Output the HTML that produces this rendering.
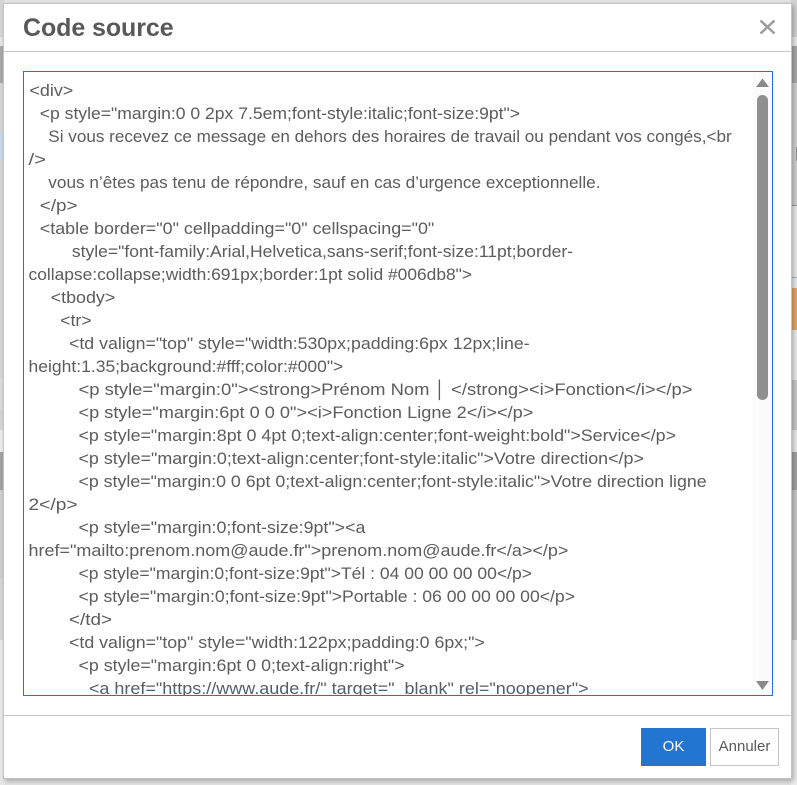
<!DOCTYPE html>
<html lang="fr">
<head>
<meta charset="utf-8">
<title>Code source</title>
<style>
html,body{margin:0;padding:0;width:797px;height:785px;overflow:hidden;background:#e4e4e4;font-family:"Liberation Sans",Arial,sans-serif}
.b{position:absolute}
#dlg{position:absolute;left:4px;top:4px;width:787px;height:774px;background:#fff;box-shadow:0 0 0 1px #c4c4c4,2px 2px 5px 1px rgba(0,0,0,.28)}
#ta{position:absolute;left:23px;top:71px;width:748px;height:623px;border:1px solid #2276d2;background:#fff}
#track{position:absolute;left:753px;top:72px;width:19px;height:623px;background:#fbfbfb}
#thumb{position:absolute;left:757px;top:95px;width:11px;height:305px;background:#8f8f8f;border-radius:5.5px}
svg{position:absolute;left:0;top:0}
svg text{font-family:"Liberation Sans",Arial,sans-serif;font-size:17px;fill:#5c5c5c;white-space:pre}
.btn{position:absolute;top:728px;height:38px;line-height:38px;text-align:center;font-size:15px;box-sizing:border-box}
#ok{left:641px;width:65px;background:#2276d2;color:#fff}
#an{left:710px;width:69px;background:#fff;border:1px solid #c5c5c5;line-height:36px;color:#595959}
</style>
</head>
<body>
<div class="b" style="left:0;top:0;width:4px;height:785px;background:#d6d6d6"></div>
<div class="b" style="left:0;top:37px;width:4px;height:9px;background:#e6e6e6"></div>
<div class="b" style="left:0;top:46px;width:4px;height:37px;background:#a8a8a8"></div>
<div class="b" style="left:0;top:132px;width:4px;height:28px;background:#c8d8ea"></div>
<div class="b" style="left:0;top:378px;width:4px;height:32px;background:#dcdcdc"></div>
<div class="b" style="left:0;top:430px;width:4px;height:22px;background:#ececec"></div>
<div class="b" style="left:0;top:452px;width:4px;height:38px;background:#a3a3a3"></div>
<div class="b" style="left:0;top:490px;width:4px;height:88px;background:#cfcfcf"></div>
<div class="b" style="left:0;top:640px;width:4px;height:145px;background:#e8e8e8"></div>

<div class="b" style="left:791px;top:0;width:6px;height:785px;background:#d4d4d4"></div>
<div class="b" style="left:791px;top:37px;width:6px;height:9px;background:#ececec"></div>
<div class="b" style="left:791px;top:46px;width:6px;height:37px;background:#ababab"></div>
<div class="b" style="left:796px;top:147px;width:1px;height:14px;background:#999"></div>
<div class="b" style="left:791px;top:205px;width:6px;height:175px;background:#eeeeee"></div>
<div class="b" style="left:791px;top:205px;width:6px;height:1px;background:#999"></div>
<div class="b" style="left:791px;top:277px;width:6px;height:1px;background:#9db8d8"></div>
<div class="b" style="left:791px;top:288px;width:6px;height:42px;background:#e3ab6c"></div>
<div class="b" style="left:791px;top:380px;width:6px;height:50px;background:#cdcdcd"></div>
<div class="b" style="left:791px;top:430px;width:6px;height:22px;background:#eeeeee"></div>
<div class="b" style="left:791px;top:452px;width:6px;height:38px;background:#a5a5a5"></div>
<div class="b" style="left:791px;top:490px;width:6px;height:150px;background:#cccccc"></div>
<div class="b" style="left:791px;top:640px;width:6px;height:145px;background:#eeeeee"></div>

<div id="dlg"></div>
<div class="b" style="left:4px;top:51px;width:787px;height:1px;background:#c5c5c5"></div>
<div class="b" style="left:4px;top:715px;width:787px;height:1px;background:#c5c5c5"></div>
<div class="b" style="left:23px;top:14px;font-size:25px;line-height:28px;font-weight:bold;color:#595959;white-space:nowrap;letter-spacing:-.08px">Code source</div>
<svg width="797" height="785" viewBox="0 0 797 785" style="z-index:3">
<path d="M760.5 20.5 L774.5 33.5 M774.5 20.5 L760.5 33.5" stroke="#9d9d9d" stroke-width="2.5" fill="none"/>
</svg>

<div id="ta"></div>
<svg width="797" height="785" viewBox="0 0 797 785" style="z-index:2">
<defs><clipPath id="c"><rect x="24" y="72" width="729" height="623"/></clipPath></defs>
<g clip-path="url(#c)"><g transform="translate(0,1)">
<text x="29.4" y="95" textLength="43.9" lengthAdjust="spacingAndGlyphs">&lt;div&gt;</text>
<text x="39.8" y="118" textLength="480.2" lengthAdjust="spacingAndGlyphs">&lt;p style="margin:0 0 2px 7.5em;font-style:italic;font-size:9pt"&gt;</text>
<text x="48.3" y="141" textLength="683.4" lengthAdjust="spacingAndGlyphs">Si vous recevez ce message en dehors des horaires de travail ou pendant vos congés,&lt;br</text>
<text x="28.5" y="164" textLength="17.5" lengthAdjust="spacingAndGlyphs">/&gt;</text>
<text x="48.3" y="187" textLength="552.2" lengthAdjust="spacingAndGlyphs">vous n’êtes pas tenu de répondre, sauf en cas d’urgence exceptionnelle.</text>
<text x="39.8" y="210" textLength="37.8" lengthAdjust="spacingAndGlyphs">&lt;/p&gt;</text>
<text x="39.8" y="233" textLength="394.5" lengthAdjust="spacingAndGlyphs">&lt;table border="0" cellpadding="0" cellspacing="0"</text>
<text x="71.9" y="256" textLength="501.1" lengthAdjust="spacingAndGlyphs">style="font-family:Arial,Helvetica,sans-serif;font-size:11pt;border-</text>
<text x="28.5" y="279" textLength="443.5" lengthAdjust="spacingAndGlyphs">collapse:collapse;width:691px;border:1pt solid #006db8"&gt;</text>
<text x="50.7" y="302" textLength="64.6" lengthAdjust="spacingAndGlyphs">&lt;tbody&gt;</text>
<text x="60.1" y="325" textLength="31.6" lengthAdjust="spacingAndGlyphs">&lt;tr&gt;</text>
<text x="69" y="348" textLength="460.7" lengthAdjust="spacingAndGlyphs">&lt;td valign="top" style="width:530px;padding:6px 12px;line-</text>
<text x="28.5" y="371" textLength="314.8" lengthAdjust="spacingAndGlyphs">height:1.35;background:#fff;color:#000"&gt;</text>
<text x="78.5" y="394" textLength="614" lengthAdjust="spacingAndGlyphs">&lt;p style="margin:0"&gt;&lt;strong&gt;Prénom Nom │ &lt;/strong&gt;&lt;i&gt;Fonction&lt;/i&gt;&lt;/p&gt;</text>
<text x="78.5" y="417" textLength="454.9" lengthAdjust="spacingAndGlyphs">&lt;p style="margin:6pt 0 0 0"&gt;&lt;i&gt;Fonction Ligne 2&lt;/i&gt;&lt;/p&gt;</text>
<text x="78.5" y="440" textLength="597.5" lengthAdjust="spacingAndGlyphs">&lt;p style="margin:8pt 0 4pt 0;text-align:center;font-weight:bold"&gt;Service&lt;/p&gt;</text>
<text x="78.5" y="463" textLength="565.4" lengthAdjust="spacingAndGlyphs">&lt;p style="margin:0;text-align:center;font-style:italic"&gt;Votre direction&lt;/p&gt;</text>
<text x="78.5" y="486" textLength="628.1" lengthAdjust="spacingAndGlyphs">&lt;p style="margin:0 0 6pt 0;text-align:center;font-style:italic"&gt;Votre direction ligne</text>
<text x="28.5" y="509" textLength="49.1" lengthAdjust="spacingAndGlyphs">2&lt;/p&gt;</text>
<text x="78.5" y="532" textLength="286.9" lengthAdjust="spacingAndGlyphs">&lt;p style="margin:0;font-size:9pt"&gt;&lt;a</text>
<text x="28.5" y="555" textLength="539.9" lengthAdjust="spacingAndGlyphs">href="mailto:prenom.nom@aude.fr"&gt;prenom.nom@aude.fr&lt;/a&gt;&lt;/p&gt;</text>
<text x="78.5" y="578" textLength="453.5" lengthAdjust="spacingAndGlyphs">&lt;p style="margin:0;font-size:9pt"&gt;Tél : 04 00 00 00 00&lt;/p&gt;</text>
<text x="78.5" y="601" textLength="496.5" lengthAdjust="spacingAndGlyphs">&lt;p style="margin:0;font-size:9pt"&gt;Portable : 06 00 00 00 00&lt;/p&gt;</text>
<text x="69" y="624" textLength="43" lengthAdjust="spacingAndGlyphs">&lt;/td&gt;</text>
<text x="69" y="647" textLength="415.8" lengthAdjust="spacingAndGlyphs">&lt;td valign="top" style="width:122px;padding:0 6px;"&gt;</text>
<text x="78.5" y="670" textLength="326.1" lengthAdjust="spacingAndGlyphs">&lt;p style="margin:6pt 0 0;text-align:right"&gt;</text>
<text x="88.9" y="693" textLength="499.8" lengthAdjust="spacingAndGlyphs">&lt;a href="https://www.aude.fr/" target="_blank" rel="noopener"&gt;</text>
</g></g>
</svg>
<div id="track" style="z-index:2"></div>
<div id="thumb" style="z-index:3"></div>
<svg width="797" height="785" viewBox="0 0 797 785" style="z-index:3">
<path d="M762.5 78.5 L769 87 L756 87 Z" fill="#8a8a8a"/>
<path d="M756 681 L769 681 L762.5 690 Z" fill="#8a8a8a"/>
</svg>
<div class="btn" id="ok">OK</div>
<div class="btn" id="an">Annuler</div>
</body>
</html>
